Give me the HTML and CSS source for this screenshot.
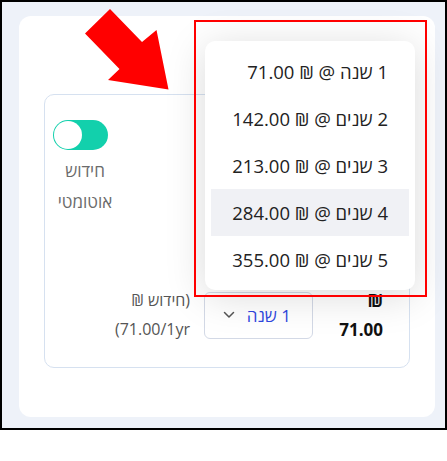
FILE: index.html
```html
<!DOCTYPE html>
<html lang="he">
<head>
    <meta charset="UTF-8">
    <meta name="viewport" content="width=device-width, initial-scale=1.0">
    <title>חידוש דומיין</title>
    <link rel="stylesheet" href="styles.css">
</head>
<body>

    <div class="frame">
        <div class="card">
            <div class="plan-box" dir="rtl">
                <div class="auto-renew">
                    <div class="toggle"><span class="knob"></span></div>
                    <div class="toggle-label">חידוש<br>אוטומטי</div>
                </div>

                <div class="plan-row">
                    <div class="price">₪ 71.00</div>
                    <div class="period-select">
                        <span class="period-value">1 שנה</span>
                        <svg class="chevron" width="12" height="8" viewBox="0 0 12 8">
                            <path d="M1.5 1.5 L6 6 L10.5 1.5" fill="none" stroke="#555" stroke-width="1.5" stroke-linecap="round" stroke-linejoin="round"/>
                        </svg>
                    </div>
                    <div class="renew-note">(חידוש ₪ 71.00/1yr)</div>
                </div>
            </div>
        </div>

        <!-- התפריט הפתוח של בחירת התקופה -->
        <ul class="period-menu" dir="rtl">
            <li>1 שנה @ ₪ 71.00</li>
            <li>2 שנים @ ₪ 142.00</li>
            <li>3 שנים @ ₪ 213.00</li>
            <li class="hover">4 שנים @ ₪ 284.00</li>
            <li>5 שנים @ ₪ 355.00</li>
        </ul>

        <!-- סימון אדום -->
        <div class="highlight"></div>
        <svg class="arrow" width="200" height="100" viewBox="0 0 200 100">
            <polygon points="110,9 142,42 156.5,30 168.5,89.5 108,80 119.5,69 85,33.5" fill="#ff0000"/>
        </svg>
    </div>

</body>
</html>
```

FILE: styles.css
```css
body {
    margin: 0;
    background-color: #ffffff;
    font-family: 'Open Sans', 'Noto Sans', 'DejaVu Sans', sans-serif;
}

.frame {
    position: relative;
    box-sizing: border-box;
    width: 447px;
    height: 430px;
    border: 2px solid #000;
    background-color: #eef2f9; /* רקע תכלת בהיר */
    padding: 14px 10px 0 17px;
}

.card {
    box-sizing: border-box;
    width: 416px;
    height: 401px;
    background-color: #fff;
    border-radius: 12px;
    padding: 78px 25px 0 25px;
}

.plan-box {
    box-sizing: border-box;
    height: 274px;
    border: 1px solid #d6e1f0;
    border-radius: 10px;
    padding: 25px 26px 0 8px;
    display: flex;
    flex-direction: column;
}

.auto-renew {
    align-self: flex-end;
    width: 64px;
    display: flex;
    flex-direction: column;
    align-items: flex-end;
}

.toggle {
    box-sizing: border-box;
    width: 55px;
    height: 30px;
    border-radius: 15px;
    background-color: #12d0ac;
    padding: 1px;
    display: flex;
    justify-content: flex-end;
}

.knob {
    width: 28px;
    height: 28px;
    border-radius: 50%;
    background-color: #fff;
}

.toggle-label {
    align-self: stretch;
    margin-top: 5px;
    text-align: center;
    font-size: 17px;
    line-height: 31px;
    color: #6b6b6b;
}

.plan-row {
    margin-top: 69px;
    display: flex;
    align-items: center;
}

.price {
    width: 46px;
    font-size: 17px;
    font-weight: 700;
    line-height: 29px;
    color: #111;
}

.period-select {
    box-sizing: border-box;
    width: 109px;
    height: 47px;
    margin-right: 24px;
    border: 1px solid #d3d9e6;
    border-radius: 6px;
    padding: 0 21px 0 19px;
    display: flex;
    align-items: center;
    gap: 12px;
}

.period-value {
    white-space: nowrap;
    font-size: 17px;
    color: #2f47e0;
}

.chevron {
    flex-shrink: 0;
    margin-right: auto;
}

.renew-note {
    width: 80px;
    margin-right: 14px;
    font-size: 16px;
    line-height: 29px;
    color: #555;
}

.period-menu {
    position: absolute;
    left: 203px;
    top: 39px;
    box-sizing: border-box;
    width: 210px;
    margin: 0;
    padding: 7px 6px;
    list-style: none;
    background-color: #fff;
    border-radius: 10px;
    box-shadow: 0 6px 40px rgba(0, 0, 0, 0.15);
}

.period-menu li {
    height: 47px;
    line-height: 47px;
    padding-right: 21px;
    font-size: 18.5px;
    color: #222;
}

.period-menu li.hover {
    background-color: #f0f1f5;
}

.highlight {
    position: absolute;
    left: 192px;
    top: 18px;
    box-sizing: border-box;
    width: 233px;
    height: 277px;
    border: 2px solid #ff0000;
}

.arrow {
    position: absolute;
    left: -2px;
    top: -2px;
}
```
